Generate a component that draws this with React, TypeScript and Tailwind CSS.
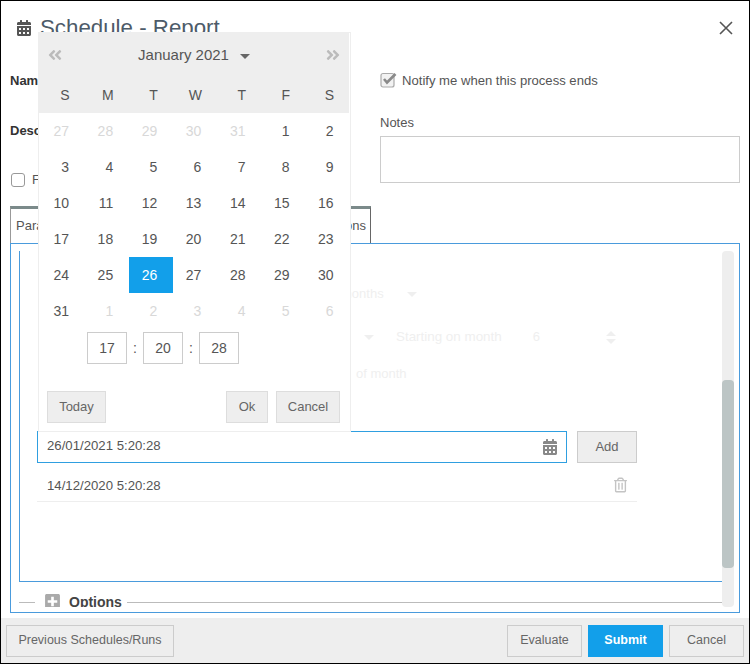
import { FaCalendarAlt, FaAngleDoubleLeft, FaAngleDoubleRight, FaPlusSquare, FaRegTrashAlt } from 'react-icons/fa';

const dayNames = ['S', 'M', 'T', 'W', 'T', 'F', 'S'];

const days: { n: number; muted?: boolean; selected?: boolean }[] = [
  { n: 27, muted: true },
  { n: 28, muted: true },
  { n: 29, muted: true },
  { n: 30, muted: true },
  { n: 31, muted: true },
  ...Array.from({ length: 31 }, (_, i) => ({ n: i + 1, selected: i + 1 === 26 })),
  ...[1, 2, 3, 4, 5, 6].map((n) => ({ n, muted: true })),
];

const Caret = ({ className }: { className: string }) => (
  <span className={`w-0 h-0 border-x-[5px] border-x-transparent border-t-[5px] ${className}`} />
);

const Calendar = () => (
  <div className="absolute left-[37px] top-[31px] w-[313px] h-[400px] bg-white border border-[#eeeeee] text-[13px] text-[#555555]">
    <div className="bg-[#eeeeee] h-[80px] mr-[1px]">
      <div className="h-[44px] flex items-center justify-between pl-[8px] pr-[8px] text-[#bbbbbb]">
        <FaAngleDoubleLeft className="w-[16px] h-[16px]" />
        <div className="flex items-center gap-[11px] text-[#555555] text-[15px]">
          <span>January 2021</span>
          <Caret className="border-t-[#666666] mt-[2px]" />
        </div>
        <FaAngleDoubleRight className="w-[16px] h-[16px]" />
      </div>
      <div className="grid grid-cols-[repeat(7,44.1px)] pl-[2px] h-[36px] items-center text-[14px]">
        {dayNames.map((d, i) => (
          <span key={i} className="text-right pr-[15.5px]">{d}</span>
        ))}
      </div>
    </div>
    <div className="grid grid-cols-[repeat(7,44.1px)] auto-rows-[36px] pl-[2px]">
      {days.map((d, i) => (
        <div
          key={i}
          className={`flex items-center justify-end pr-[16px] text-[14px] ${
            d.selected ? 'bg-[#129fea] text-white' : d.muted ? 'text-[#d8d8d8]' : 'text-[#555555]'
          }`}
        >
          {d.n}
        </div>
      ))}
    </div>
    <div className="flex items-center mt-[3px] ml-[48px] text-[14px]">
      <div className="w-[40px] h-[32px] border border-[#cccccc] flex items-center justify-center">17</div>
      <span className="w-[16px] text-center">:</span>
      <div className="w-[40px] h-[32px] border border-[#cccccc] flex items-center justify-center">20</div>
      <span className="w-[16px] text-center">:</span>
      <div className="w-[40px] h-[32px] border border-[#cccccc] flex items-center justify-center">28</div>
    </div>
    <div className="flex mt-[27px] pl-[8px] pr-[10px] text-[#666666]">
      <button className="w-[59px] h-[32px] bg-[#eeeeee] border border-[#dddddd]">Today</button>
      <button className="w-[42px] h-[32px] bg-[#eeeeee] border border-[#dddddd] ml-auto">Ok</button>
      <button className="w-[64px] h-[32px] bg-[#eeeeee] border border-[#dddddd] ml-[8px]">Cancel</button>
    </div>
  </div>
);

const App = () => {
  return (
    <div className="relative w-[750px] h-[664px] bg-white border border-black flex flex-col overflow-hidden text-[13px] text-[#555555] font-['Liberation_Sans',Arial,sans-serif]">
      {/* header */}
      <div className="h-[54px] flex items-center pl-[16px] pr-[15px] shrink-0">
        <FaCalendarAlt className="w-[14px] h-[16px] text-[#555555]" />
        <h1 className="ml-[9px] text-[22.3px] text-[#4d5b69]">Schedule - Report</h1>
        <svg className="ml-auto w-[16px] h-[16px] text-[#555555]" viewBox="0 0 16 16" fill="none" stroke="currentColor" strokeWidth="1.6">
          <path d="M2 2l12 12M14 2L2 14" />
        </svg>
      </div>

      {/* form */}
      <div className="h-[151px] shrink-0 flex pl-[9px]">
        <div className="w-[370px] pt-[18px]">
          <div className="h-[15px] leading-[15px] font-bold text-[#333333]">Name</div>
          <div className="h-[15px] leading-[15px] font-bold text-[#333333] mt-[35px]">Description</div>
          <div className="flex items-center gap-[7px] mt-[34px] ml-[1px] h-[15px]">
            <span className="w-[14px] h-[14px] border border-[#999999] rounded-[3px] bg-white" />
            <span>F</span>
          </div>
        </div>
        <div className="w-[360px]">
          <div className="flex items-center mt-[18px] h-[16px]">
            <svg className="w-[17px] h-[16px] -mt-[2px]" viewBox="0 0 17 16" fill="none">
              <rect x="1" y="1.5" width="13" height="13.5" rx="2" stroke="#aaaaaa" strokeWidth="1.2" fill="#f2f2f2" />
              <path d="M4 7l3 3.5L15.5 2" stroke="#8a8a8a" strokeWidth="2.6" />
            </svg>
            <span className="ml-[5px] text-[13.1px]">Notify me when this process ends</span>
          </div>
          <div className="mt-[26px] h-[15px] leading-[15px]">Notes</div>
          <textarea className="block mt-[6px] w-full h-[47px] border border-[#cccccc] resize-none" />
        </div>
      </div>

      {/* tabs */}
      <div className="h-[37px] shrink-0 ml-[9px] w-[361px] flex border-t-[3px] border-t-[#7b8a8a] border-l border-l-[#999999] border-r border-r-[#666666]">
        <div className="w-[100px] pl-[5px] pt-[7px]">Parameters</div>
        <div className="flex-1 text-right pr-[4px] pt-[7px]">Options</div>
      </div>

      {/* panel */}
      <div className="ml-[9px] w-[730px] h-[370px] shrink-0 border border-[#4a9bdc] pl-[8px] pt-[7px] flex">
        <div className="w-[703px] h-[356px] overflow-hidden">
          <div className="h-[331px] border-l border-b border-[#4a9bdc] pt-[33px]">
            <div className="flex items-center h-[20px] ml-[321px] text-[#efefef]">
              <span>months</span>
              <Caret className="border-t-[#efefef] ml-[23px]" />
            </div>
            <div className="relative flex items-center h-[20px] mt-[23px] ml-[344px] text-[#efefef]">
              <Caret className="border-t-[#efefef]" />
              <span className="ml-[22px] text-[13.4px]">Starting on month</span>
              <span className="ml-[31px]">6</span>
              <span className="ml-[66px] flex flex-col gap-[3px]">
                <span className="w-0 h-0 border-x-[5px] border-x-transparent border-b-[5px] border-b-[#efefef]" />
                <span className="w-0 h-0 border-x-[5px] border-x-transparent border-t-[5px] border-t-[#efefef]" />
              </span>
            </div>
            <div className="flex items-center h-[20px] mt-[17px] ml-[336px] text-[#efefef]">of month</div>

            <div className="flex mt-[47px] ml-[17px]">
              <div className="w-[530px] h-[32px] border border-[#2f9fe0] flex items-center pl-[9px] pr-[9px] pb-[2px] text-[#555555]">
                <span className="text-[13.2px]">26/01/2021 5:20:28</span>
                <FaCalendarAlt className="ml-auto mt-[2px] w-[14px] h-[16px] text-[#888888]" />
              </div>
              <button className="ml-[10px] w-[60px] h-[32px] bg-[#eeeeee] border border-[#cccccc] text-[#666666]">Add</button>
            </div>
            <div className="ml-[17px] mt-[6px] w-[600px] h-[33px] flex items-center pl-[10px] pr-[10px] pt-[2px] border-b border-[#eeeeee]">
              <span className="text-[13.2px]">14/12/2020 5:20:28</span>
              <FaRegTrashAlt className="ml-auto -mt-[2px] w-[13px] h-[16px] text-[#c4c4c4]" />
            </div>
          </div>

          <div className="flex items-center h-[26px] mt-[7px]">
            <span className="w-[16px] h-px bg-[#bbbbbb]" />
            <FaPlusSquare className="ml-[10px] -mt-[2px] w-[15px] h-[17px] text-[#aaaaaa]" />
            <span className="ml-[9px] text-[14px] font-bold text-[#444444]">Options</span>
            <span className="ml-[5px] flex-1 h-px bg-[#bbbbbb]" />
          </div>
        </div>
        <div className="w-[12px] h-[356px] bg-[#eeeeee] rounded-[4px] flow-root">
          <div className="mt-[129px] h-[188px] bg-[#bcc5c5] rounded-[4px]" />
        </div>
      </div>

      {/* footer */}
      <div className="mt-[5px] flex-1 bg-[#eeeeee] flex items-center pl-[5px] pr-[5px] text-[#666666] text-[12.5px]">
        <button className="w-[168px] h-[32px] border border-[#cccccc]">Previous Schedules/Runs</button>
        <button className="ml-auto w-[75px] h-[32px] border border-[#cccccc]">Evaluate</button>
        <button className="ml-[6px] w-[75px] h-[32px] bg-[#129fea] text-white font-bold">Submit</button>
        <button className="ml-[6px] w-[75px] h-[32px] border border-[#cccccc]">Cancel</button>
      </div>

      <Calendar />
    </div>
  );
};

export default App;
